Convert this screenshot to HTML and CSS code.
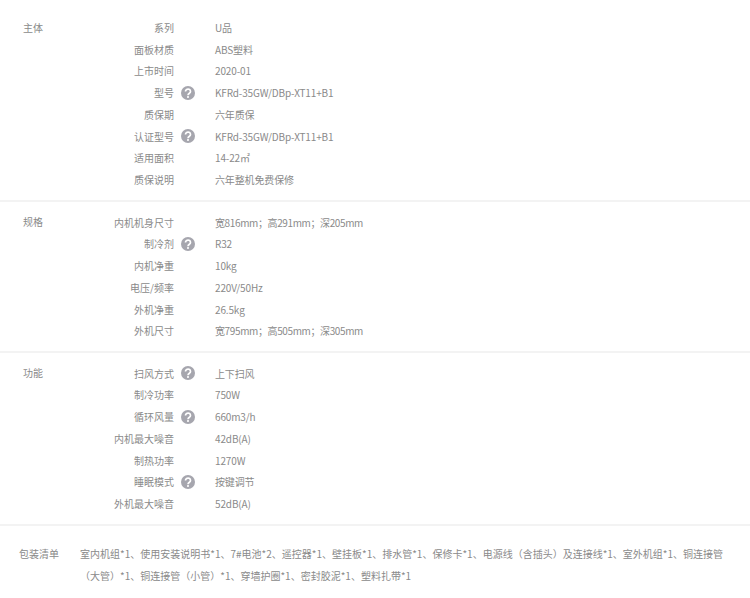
FILE: index.html
```html
<!DOCTYPE html>
<html lang="zh">
<head>
<meta charset="utf-8">
<title>规格参数</title>
<link rel="stylesheet" href="styles.css">
</head>
<body>
<svg class="defs" width="0" height="0" aria-hidden="true">
<symbol id="q" viewBox="0 0 14 14"><circle cx="7" cy="7" r="7" fill="#a6a6ae"/><path d="M4.5 5.5a2.5 2.3 0 1 1 3.9 1.8c-.9.6-1.4 1-1.4 2" fill="none" stroke="#fff" stroke-width="1.7"/><circle cx="7" cy="11" r="1.05" fill="#fff"/></symbol>
</svg>
<section class="group group-first">
  <h3 class="group-title">主体</h3>
  <dl class="rows">
    <div class="row"><dt>系列</dt><dd>U品</dd></div>
    <div class="row"><dt>面板材质</dt><dd>ABS塑料</dd></div>
    <div class="row"><dt>上市时间</dt><dd>2020-01</dd></div>
    <div class="row"><dt>型号</dt><svg class="help"><use href="#q"/></svg><dd>KFRd-35GW/DBp-XT11+B1</dd></div>
    <div class="row"><dt>质保期</dt><dd>六年质保</dd></div>
    <div class="row"><dt>认证型号</dt><svg class="help"><use href="#q"/></svg><dd>KFRd-35GW/DBp-XT11+B1</dd></div>
    <div class="row"><dt>适用面积</dt><dd>14-22㎡</dd></div>
    <div class="row"><dt>质保说明</dt><dd>六年整机免费保修</dd></div>
  </dl>
</section>
<section class="group">
  <h3 class="group-title">规格</h3>
  <dl class="rows">
    <div class="row"><dt>内机机身尺寸</dt><dd class="dims">宽816mm；高291mm；深205mm</dd></div>
    <div class="row"><dt>制冷剂</dt><svg class="help"><use href="#q"/></svg><dd>R32</dd></div>
    <div class="row"><dt>内机净重</dt><dd>10kg</dd></div>
    <div class="row"><dt>电压/频率</dt><dd>220V/50Hz</dd></div>
    <div class="row"><dt>外机净重</dt><dd>26.5kg</dd></div>
    <div class="row"><dt>外机尺寸</dt><dd class="dims">宽795mm；高505mm；深305mm</dd></div>
  </dl>
</section>
<section class="group">
  <h3 class="group-title">功能</h3>
  <dl class="rows">
    <div class="row"><dt>扫风方式</dt><svg class="help"><use href="#q"/></svg><dd>上下扫风</dd></div>
    <div class="row"><dt>制冷功率</dt><dd>750W</dd></div>
    <div class="row"><dt>循环风量</dt><svg class="help"><use href="#q"/></svg><dd>660m3/h</dd></div>
    <div class="row"><dt>内机最大噪音</dt><dd>42dB(A)</dd></div>
    <div class="row"><dt>制热功率</dt><dd>1270W</dd></div>
    <div class="row"><dt>睡眠模式</dt><svg class="help"><use href="#q"/></svg><dd>按键调节</dd></div>
    <div class="row"><dt>外机最大噪音</dt><dd>52dB(A)</dd></div>
  </dl>
</section>
<section class="pack">
  <h3 class="pack-title">包装清单</h3>
  <p class="pack-text">室内机组*1、使用安装说明书*1、7#电池*2、遥控器*1、壁挂板*1、排水管*1、保修卡*1、电源线（含插头）及连接线*1、室外机组*1、铜连接管（大管）*1、铜连接管（小管）*1、穿墙护圈*1、密封胶泥*1、塑料扎带*1</p>
</section>
</body>
</html>
```
FILE: styles.css
```css
html, body { margin: 0; padding: 0; background: #fff; }
body {
  font-family: "Noto Sans CJK SC", "Noto Sans", sans-serif;
  font-size: 10px;
  color: #8a8a8a;
  padding-top: 6px;
  overflow: hidden;
}
.defs { position: absolute; }
.group {
  display: flex;
  padding: 9.5px 0 9px 23px;
  border-bottom: 2px solid #f3f3f3;
}
.group-first { padding-top: 10.5px; padding-bottom: 9.25px; }
.group-title { margin: 0; width: 91px; font: inherit; line-height: 21.75px; }
.rows { margin: 0; }
.row { display: flex; align-items: center; height: 21.75px; position: relative; white-space: nowrap; }
.row dt { width: 60px; text-align: right; }
.row dd { margin: 0 0 0 41px; letter-spacing: -0.14px; }
.row dd.dims { letter-spacing: -0.38px; }
.help { position: absolute; left: 67px; top: 3.9px; width: 14px; height: 14px; }
.pack { display: flex; padding: 17px 20px 0 19px; }
.pack-title { margin: 0; width: 61px; flex: none; font: inherit; line-height: 22.5px; }
.pack-text { margin: 0; line-height: 22.5px; }
```
